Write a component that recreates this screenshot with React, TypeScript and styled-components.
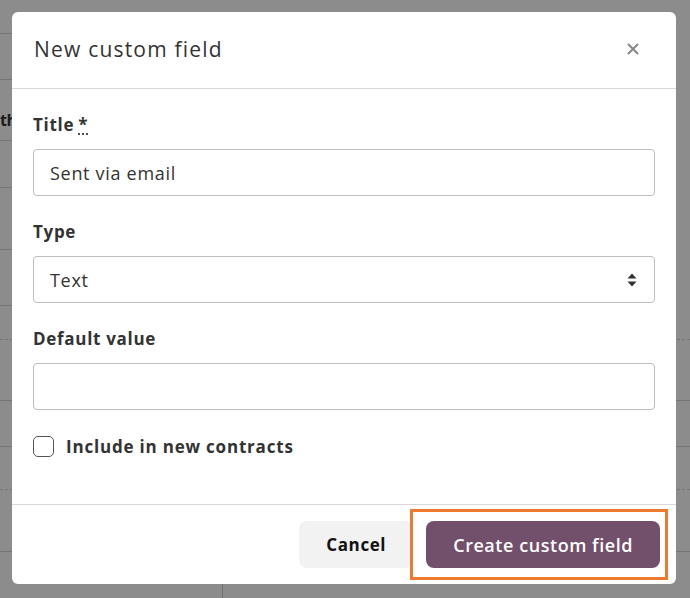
import React from 'react';
import styled, { createGlobalStyle } from 'styled-components';

const GlobalStyle = createGlobalStyle`
  html, body {
    margin: 0;
    padding: 0;
    background: #fff;
  }
  * {
    box-sizing: border-box;
  }
`;

const Page = styled.div`
  position: relative;
  width: 690px;
  height: 598px;
  overflow: hidden;
  font-family: "Open Sans", "Liberation Sans", sans-serif;
`;

// the table that sits behind the dialog
const Backdrop = styled.div`
  display: flex;
  flex-direction: column;
  width: 100%;
  height: 100%;
`;

const BackRow = styled.div<{ $h: number; $dashed?: boolean; $short?: boolean }>`
  display: flex;
  justify-content: flex-start;
  align-items: center;
  flex: 0 0 ${(p) => p.$h}px;
  width: ${(p) => (p.$short ? '40%' : '100%')};
  border-bottom: 1px ${(p) => (p.$dashed ? 'dashed' : 'solid')} #d6d6d6;
`;

const HeadCell = styled.div`
  font-weight: 700;
  font-size: 16px;
  letter-spacing: -0.5px;
  color: #333;
  padding-top: 20px;
`;

const BottomCell = styled.div`
  width: 223px;
  height: 100%;
  border-right: 1px solid #d6d6d6;
`;

const Shade = styled.div`
  position: absolute;
  inset: 0;
  background: rgba(0, 0, 0, 0.45);
`;

const Dialog = styled.div`
  position: absolute;
  top: 12px;
  left: 12px;
  width: 664px;
  height: 572px;
  background: #fff;
  border-radius: 6px;
  display: flex;
  flex-direction: column;
  color: #333;
`;

const Header = styled.div`
  display: flex;
  align-items: center;
  justify-content: space-between;
  height: 77px;
  padding: 0 36px 2px 22px;
  border-bottom: 1px solid #d9d9d9;
`;

const Heading = styled.h2`
  margin: 0;
  font-size: 21px;
  font-weight: 500;
  letter-spacing: 1.2px;
  color: #333;
`;

const CloseButton = styled.button`
  border: none;
  background: none;
  padding: 0;
  width: 14px;
  height: 14px;
  display: flex;
  cursor: pointer;
`;

const Body = styled.div`
  flex: 1;
  display: flex;
  flex-direction: column;
  padding: 25px 21px 0 21px;
`;

const Field = styled.div`
  display: flex;
  flex-direction: column;
  margin-bottom: 25px;
`;

const Label = styled.label`
  font-size: 17px;
  font-weight: 700;
  letter-spacing: 0.7px;
  line-height: 22px;
  margin-bottom: 13px;
  color: #333;
`;

const Req = styled.abbr`
  text-decoration: underline dotted;
  text-underline-offset: 3px;
  margin-left: 4px;
`;

const Input = styled.input`
  width: 100%;
  height: 47px;
  border: 1px solid #bdbdbd;
  border-radius: 4px;
  padding: 0 16px;
  font-family: "Open Sans", "Liberation Sans", sans-serif;
  font-size: 18px;
  letter-spacing: 0.7px;
  color: #333;
  outline: none;
`;

const SelectBox = styled.div`
  display: flex;
  align-items: center;
  justify-content: space-between;
  height: 47px;
  border: 1px solid #bdbdbd;
  border-radius: 4px;
  padding: 0 17px 0 16px;
  font-size: 18px;
  letter-spacing: 0.7px;
  color: #333;
`;

const CheckRow = styled.label`
  display: flex;
  align-items: center;
  gap: 12px;
  font-size: 17px;
  font-weight: 700;
  letter-spacing: 0.8px;
  color: #333;
`;

const Box = styled.span`
  width: 21px;
  height: 21px;
  border: 1.5px solid #555;
  border-radius: 5px;
  background: #fff;
`;

const Footer = styled.div`
  display: flex;
  justify-content: flex-end;
  align-items: center;
  gap: 13px;
  height: 80px;
  padding: 0 16px;
  border-top: 1px solid #d9d9d9;
`;

const Button = styled.button<{ $primary?: boolean }>`
  position: relative;
  height: 47px;
  border: none;
  border-radius: 8px;
  font-family: "Open Sans", "Liberation Sans", sans-serif;
  cursor: pointer;
  padding: 0 27px;
  font-size: ${(p) => (p.$primary ? '18px' : '17px')};
  letter-spacing: ${(p) => (p.$primary ? '0.55px' : '0.6px')};
  font-weight: ${(p) => (p.$primary ? 600 : 700)};
  background: ${(p) => (p.$primary ? '#72506c' : '#f2f2f2')};
  color: ${(p) => (p.$primary ? '#fff' : '#111')};
`;

// orange annotation frame drawn around the primary button
const Highlight = styled.span`
  position: absolute;
  top: -12px;
  bottom: -12px;
  left: -16px;
  right: -8px;
  border: 3px solid #ee7a31;
  pointer-events: none;
`;

const backRows = [
  { h: 34, short: true },
  { h: 46, short: true },
  { h: 61, short: true, head: 'th' },
  { h: 47, short: true },
  { h: 62, short: true },
  { h: 56, short: true },
  { h: 34, dashed: true },
  { h: 61 },
  { h: 46 },
  { h: 43, dashed: true },
  { h: 62 },
];

export default function App() {
  return (
    <Page>
      <GlobalStyle />
      <Backdrop>
        {backRows.map((r, i) => (
          <BackRow key={i} $h={r.h} $dashed={r.dashed} $short={r.short}>
            {r.head && <HeadCell>{r.head}</HeadCell>}
          </BackRow>
        ))}
        <BackRow $h={60} style={{ borderBottom: 'none' }}>
          <BottomCell />
        </BackRow>
      </Backdrop>
      <Shade />
      <Dialog>
        <Header>
          <Heading>New custom field</Heading>
          <CloseButton aria-label="Close">
            <svg width="14" height="14" viewBox="0 0 14 14">
              <path d="M2.5 2.5 L11.5 11.5 M11.5 2.5 L2.5 11.5" stroke="#888" strokeWidth="2" strokeLinecap="round" />
            </svg>
          </CloseButton>
        </Header>
        <Body>
          <Field>
            <Label>
              Title<Req title="required">*</Req>
            </Label>
            <Input defaultValue="Sent via email" />
          </Field>
          <Field>
            <Label>Type</Label>
            <SelectBox>
              <span>Text</span>
              <svg width="10" height="14" viewBox="0 0 10 14">
                <path d="M5 0.5 L9.5 5.5 L0.5 5.5 Z M5 13.5 L9.5 8.5 L0.5 8.5 Z" fill="#333" />
              </svg>
            </SelectBox>
          </Field>
          <Field>
            <Label>Default value</Label>
            <Input />
          </Field>
          <CheckRow>
            <Box />
            Include in new contracts
          </CheckRow>
        </Body>
        <Footer>
          <Button>Cancel</Button>
          <Button $primary>
            Create custom field
            <Highlight />
          </Button>
        </Footer>
      </Dialog>
    </Page>
  );
}
